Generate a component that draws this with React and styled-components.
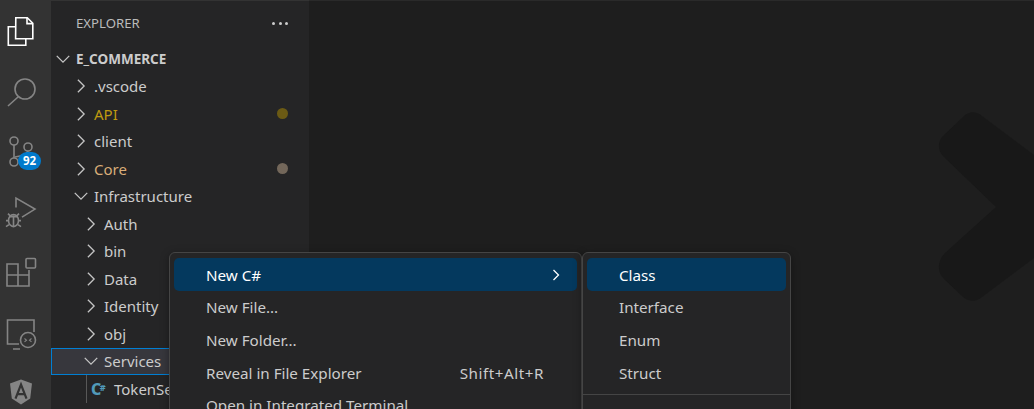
import React from 'react'
import styled, { createGlobalStyle } from 'styled-components'

const GlobalStyle = createGlobalStyle`
  html, body {
    margin: 0;
    height: 100%;
    overflow: hidden;
    background: #1e1e1e;
  }
  #root {
    height: 100%;
  }
`;

const Workbench = styled.div`
  position: relative;
  display: flex;
  width: 1034px;
  height: 409px;
  overflow: hidden;
  font-family: "Noto Sans", "Open Sans", sans-serif;
  color: #cccccc;
`;

const ActivityBar = styled.nav`
  flex: 0 0 51px;
  display: flex;
  flex-direction: column;
  background: #333333;
  padding-top: 1px;
`;

const ActivityItem = styled.div`
  position: relative;
  height: 61.2px;
  flex: none;
  svg {
    display: block;
  }
`;

const Badge = styled.span`
  position: absolute;
  left: 18px;
  top: 29px;
  width: 23px;
  height: 18px;
  border-radius: 9px;
  background: #007acc;
  color: #fff;
  font-size: 11.5px;
  font-weight: 700;
  line-height: 18px;
  text-align: center;
`;

const Sidebar = styled.aside`
  flex: 0 0 258px;
  display: flex;
  flex-direction: column;
  background: #252526;
  border-top: 1px solid #333;
`;

const SidebarHeader = styled.header`
  display: flex;
  align-items: center;
  justify-content: space-between;
  height: 44px;
  padding: 0 21px 0 25px;
  font-size: 13.2px;
  color: #bbbbbb;
`;

const MoreDots = styled.div`
  display: flex;
  gap: 3.5px;
  span {
    width: 3px;
    height: 3px;
    border-radius: 50%;
    background: #cccccc;
  }
`;

const Tree = styled.div`
  display: flex;
  flex-direction: column;
`;

const Row = styled.div`
  position: relative;
  display: flex;
  align-items: center;
  flex: none;
  height: 27.5px;
  box-sizing: border-box;
  padding-left: ${(p) => p.$indent}px;
  font-size: ${(p) => (p.$root ? 13.5 : 15)}px;
  font-weight: ${(p) => (p.$root ? 700 : 400)};
  color: ${(p) => p.$color || '#cccccc'};
  white-space: nowrap;
  ${(p) => p.$selected && `
    background: #37373d;
    outline: 1px solid #007fd4;
    outline-offset: -1px;
  `}
`;

const Twistie = styled.svg`
  flex: 0 0 20px;
  width: 20px;
  height: 20px;
  margin-right: ${(p) => p.$gap ?? 3.5}px;
  fill: none;
  stroke: #c5c5c5;
  stroke-width: 1.05;
`;

const Dot = styled.span`
  position: absolute;
  left: 226px;
  top: 8px;
  width: 11px;
  height: 11px;
  border-radius: 50%;
  background: ${(p) => p.$color};
`;

const IndentGuide = styled.span`
  position: absolute;
  left: 35px;
  top: 0;
  bottom: 0;
  width: 1px;
  background: #585858;
`;

const CsIcon = styled.span`
  flex: none;
  width: 16px;
  margin-right: 7px;
  font-size: 16px;
  font-weight: 800;
  letter-spacing: -1.5px;
  line-height: 1;
  color: #519aba;
  sup {
    font-size: 9px;
    vertical-align: 4px;
    line-height: 0;
  }
`;

const Editor = styled.main`
  position: relative;
  flex: 1;
  background: #1e1e1e;
  border-top: 1px solid #2a2a2a;
`;

const Watermark = styled.svg`
  position: absolute;
  left: 628px;
  top: 110px;
  width: 97px;
  height: 200px;
  fill: #181818;
`;

const ContextMenu = styled.div`
  position: absolute;
  left: ${(p) => p.$left}px;
  top: 252px;
  width: ${(p) => p.$width}px;
  height: 170px;
  box-sizing: border-box;
  padding: 5px 4px;
  background: #252526;
  border: 1px solid #454545;
  border-radius: 6px;
  box-shadow: 0 2px 8px rgba(0, 0, 0, 0.36);
  font-size: 15.2px;
`;

const MenuItem = styled.div`
  display: flex;
  align-items: center;
  justify-content: space-between;
  height: ${(p) => (p.$active ? 33 : 32.7)}px;
  padding: 0 ${(p) => p.$right ?? 33}px 0 32px;
  border-radius: 5px;
  color: ${(p) => (p.$active ? '#ffffff' : '#cccccc')};
  background: ${(p) => (p.$active ? '#04395e' : 'transparent')};
  white-space: nowrap;
`;

const Shortcut = styled.span`
  letter-spacing: 0.55px;
`;

const MenuChevron = styled.svg`
  width: 16px;
  height: 16px;
  fill: none;
  stroke: #ffffff;
  stroke-width: 1.3;
`;

const Separator = styled.div`
  height: 1px;
  margin: 5px -4px 0;
  background: #454545;
`;

const iconColor = '#858585';

const IconSvg = ({ children }) => (
  <svg width="51" height="61" viewBox="0 0 51 61" fill="none" stroke={iconColor} strokeWidth="1.6">
    {children}
  </svg>
);

const FilesIcon = () => (
  <svg width="51" height="61" viewBox="0 0 51 61" fill="none" stroke="#ffffff" strokeWidth="1.6">
    <path d="M15.8 16.8h11.5l5.5 5.5v15.4h-17.2z" />
    <path d="M27 17v5.6h5.6" />
    <path d="M15.5 25.8H8.3v18.4h17.5v-6.4" />
  </svg>
);

const SearchIcon = () => (
  <IconSvg>
    <g transform="translate(0 -61)">
      <circle cx="25" cy="88" r="10" />
      <path d="M18 96 8 105" />
    </g>
  </IconSvg>
);

const GitIcon = () => (
  <IconSvg>
    <g transform="translate(0 -122)">
      <circle cx="14" cy="140" r="4" />
      <circle cx="14" cy="161" r="4" />
      <circle cx="28" cy="146" r="4" />
      <path d="M14 144v13M15 156c7-1 12-2 13-6" />
    </g>
  </IconSvg>
);

const DebugIcon = () => (
  <IconSvg>
    <g transform="translate(0 -183.4)">
      <path d="M16 206v-9.500l19 11-13 8" />
      <ellipse cx="13.500" cy="219" rx="5" ry="6" />
      <path d="M9 215h9M8 212l3 3M19 212l-3 3M6 219h3M18 219h3M6 225l3-2M21 225l-3-2M13.500 214v11" />
    </g>
  </IconSvg>
);

const ExtensionsIcon = () => (
  <IconSvg>
    <g transform="translate(0 -245)">
      <rect x="26" y="257.500" width="9.500" height="9.500" rx="1" />
      <path d="M7 263h11v22H7zM7 274h22v11H18M18 263v11M29 274v-5" />
    </g>
  </IconSvg>
);

const RemoteIcon = () => (
  <IconSvg>
    <g transform="translate(0 -306)">
      <path d="M19 343H7.500v-24H34v12M13 348h7" />
      <circle cx="28" cy="339" r="7.500" />
      <path d="M24.500 337.500l2 1.700-2 1.700M31.500 337.500l-2 1.700 2 1.700" strokeWidth="1.100" />
    </g>
  </IconSvg>
);

const AngularIcon = () => (
  <IconSvg>
    <g transform="translate(0 -367.400)">
      <path d="M21 379l11 4-1.800 15L21 404l-9.200-6L10 383z" fill="#858585" stroke="none" />
      <path d="M15.500 398 21 384l5.500 14M17.500 393.500h7" stroke="#333333" strokeWidth="2.200" />
    </g>
  </IconSvg>
);

const Chevron = ({ open, gap }) => (
  <Twistie viewBox="0 0 16 16" $gap={gap}>
    {open ? <path d="M3 5.500l5 5 5-5" /> : <path d="M5.500 3l5 5-5 5" />}
  </Twistie>
);

const activityIcons = [FilesIcon, SearchIcon, GitIcon, DebugIcon, ExtensionsIcon, RemoteIcon, AngularIcon];

const folders = [
  { name: '.vscode', indent: 19.5 },
  { name: 'API', indent: 19.5, color: '#bf9a10', dot: '#6b5a14' },
  { name: 'client', indent: 19.5 },
  { name: 'Core', indent: 19.5, color: '#d9ad78', dot: '#73675a' },
  { name: 'Infrastructure', indent: 19.5, open: true },
  { name: 'Auth', indent: 29.5 },
  { name: 'bin', indent: 29.5 },
  { name: 'Data', indent: 29.5 },
  { name: 'Identity', indent: 29.5 },
  { name: 'obj', indent: 29.5 },
  { name: 'Services', indent: 29.5, open: true, selected: true },
];

const mainMenu = [
  { label: 'New File...' },
  { label: 'New Folder...' },
  { label: 'Reveal in File Explorer', shortcut: 'Shift+Alt+R' },
  { label: 'Open in Integrated Terminal' },
];

const subMenu = ['Interface', 'Enum', 'Struct'];

function App() {
  return (
    <Workbench>
      <GlobalStyle />
      <ActivityBar>
        {activityIcons.map((Icon, i) => (
          <ActivityItem key={i}>
            <Icon />
            {i === 2 && <Badge>92</Badge>}
          </ActivityItem>
        ))}
      </ActivityBar>

      <Sidebar>
        <SidebarHeader>
          EXPLORER
          <MoreDots><span /><span /><span /></MoreDots>
        </SidebarHeader>
        <Tree>
          <Row $root $indent={2}>
            <Chevron open gap={3} />
            E_COMMERCE
          </Row>
          {folders.map((f) => (
            <Row key={f.name} $indent={f.indent} $color={f.color} $selected={f.selected}>
              <Chevron open={f.open} />
              {f.name}
              {f.dot && <Dot $color={f.dot} />}
            </Row>
          ))}
          <Row $indent={40}>
            <IndentGuide />
            <CsIcon>C<sup>#</sup></CsIcon>
            TokenService.cs
          </Row>
        </Tree>
      </Sidebar>

      <Editor>
        <Watermark viewBox="0 0 97 200">
          <path d="M26 6C32 0 39 0 45 5L97 44V147L45 186C39 191 32 191 26 186L7 168C0 162 0 150 8 142L59 96 8 47C0 40 0 30 7 24Z" />
        </Watermark>
      </Editor>

      <ContextMenu $left={169} $width={413}>
        <MenuItem $active $right={13}>
          New C#
          <MenuChevron viewBox="0 0 16 16"><path d="M5.500 3l5 5-5 5" /></MenuChevron>
        </MenuItem>
        {mainMenu.map((item) => (
          <MenuItem key={item.label}>
            {item.label}
            {item.shortcut && <Shortcut>{item.shortcut}</Shortcut>}
          </MenuItem>
        ))}
      </ContextMenu>

      <ContextMenu $left={582} $width={209}>
        <MenuItem $active>Class</MenuItem>
        {subMenu.map((label) => (
          <MenuItem key={label}>{label}</MenuItem>
        ))}
        <Separator />
      </ContextMenu>
    </Workbench>
  );
}

export default App
